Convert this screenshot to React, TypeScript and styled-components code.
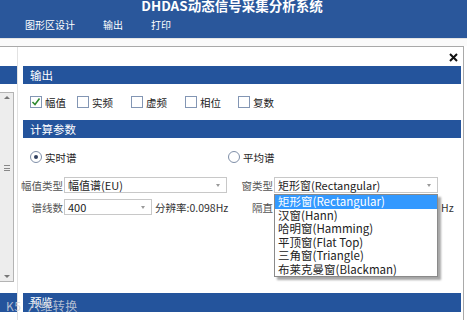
import React from "react";
import styled, { createGlobalStyle } from "styled-components";

const BLUE = "#24549c";
const FONT = `"Noto Sans CJK SC", "Noto Sans", sans-serif`;

const GlobalStyle = createGlobalStyle`
  html, body {
    margin: 0;
    padding: 0;
    background: #ffffff;
  }
  body {
    font-family: ${FONT};
    overflow: hidden;
  }
  * {
    box-sizing: border-box;
  }
`;

const Screen = styled.div`
  position: relative;
  width: 467px;
  height: 320px;
  overflow: hidden;
  display: flex;
  flex-direction: column;
  background: #fff;
`;

const TitleBar = styled.header`
  height: 38px;
  flex-shrink: 0;
  background: #2a579b;
  color: #fff;
  display: flex;
  flex-direction: column;
  overflow: hidden;
`;

const AppTitle = styled.div`
  margin-top: -2px;
  height: 14px;
  line-height: 14px;
  text-align: center;
  font-size: 13.5px;
  font-weight: 700;
  padding-right: 3px;
`;

const MenuBar = styled.nav`
  display: flex;
  gap: 28px;
  margin-top: 6px;
  padding-left: 25px;
  font-size: 10px;
  line-height: 14px;
`;

const Gutter = styled.div`
  height: 8px;
  flex-shrink: 0;
  background: #fafafa;
  border-top: 1px solid #e4e4e4;
`;

const Workspace = styled.div`
  flex: 1;
  display: flex;
  width: 464px;
  border-top: 1px solid #a9a9a9;
  border-right: 1px solid #a9a9a9;
`;

const SidePanel = styled.aside`
  width: 18px;
  flex-shrink: 0;
  display: flex;
  flex-direction: column;
  padding-top: 19px;
  border-right: 1px solid #e2e2e2;
`;

const SideStrip = styled.div<{ $h: number; $mt?: number }>`
  height: ${(p) => p.$h}px;
  margin-top: ${(p) => p.$mt ?? 0}px;
  background: ${BLUE};
`;

const ScrollBox = styled.div`
  margin-top: 8px;
  width: 14px;
  height: 190px;
  border: 1px solid #b4b4b4;
  border-left: none;
  background: #ededed;
  display: flex;
  flex-direction: column;
  align-items: center;
  justify-content: space-between;
  padding: 3px 0;
`;

const ScrollArrow = styled.span<{ $up?: boolean }>`
  width: 0;
  height: 0;
  border-left: 3px solid transparent;
  border-right: 3px solid transparent;
  ${(p) => (p.$up ? "border-bottom: 3px solid #777;" : "border-top: 3px solid #777;")}
`;

const Grip = styled.span`
  width: 6px;
  height: 6px;
  border-top: 1px solid #888;
  border-bottom: 1px solid #888;
  position: relative;
  margin-top: 66px;
  margin-bottom: auto;
  &::after {
    content: "";
    position: absolute;
    left: 0;
    right: 0;
    top: 1.5px;
    border-top: 1px solid #888;
  }
`;

const DialogBody = styled.section`
  flex: 1;
  display: flex;
  flex-direction: column;
  padding: 0 2px 0 5px;
  position: relative;
`;

const CloseRow = styled.div`
  height: 19px;
  display: flex;
  justify-content: flex-end;
  align-items: flex-start;
  padding: 6px 3px 0 0;
`;

const SectionHeader = styled.div<{ $h?: number }>`
  height: ${(p) => p.$h ?? 18}px;
  flex-shrink: 0;
  background: ${BLUE};
  color: #fff;
  font-size: 11.5px;
  line-height: ${(p) => p.$h ?? 18}px;
  padding-left: 7px;
`;

const CheckRow = styled.div`
  height: 36px;
  display: flex;
  align-items: center;
  padding-left: 7px;
`;

const CheckItem = styled.label<{ $w?: number }>`
  display: flex;
  align-items: center;
  gap: 3px;
  width: ${(p) => (p.$w ? `${p.$w}px` : "auto")};
  font-size: 10.5px;
  color: #222;
`;

const CheckBox = styled.span`
  width: 12px;
  height: 12px;
  border: 1px solid #8396b4;
  background: #fff;
  display: flex;
  align-items: center;
  justify-content: center;
`;

const RadioRow = styled.div`
  height: 38px;
  display: flex;
  align-items: center;
`;

const Half = styled.div<{ $w?: number; $pl?: number }>`
  display: flex;
  align-items: center;
  width: ${(p) => (p.$w ? `${p.$w}px` : "auto")};
  flex: ${(p) => (p.$w ? "none" : "1")};
  padding-left: ${(p) => p.$pl ?? 0}px;
`;

const RadioItem = styled.label`
  display: flex;
  align-items: center;
  gap: 3px;
  font-size: 10.5px;
  color: #222;
`;

const RadioCircle = styled.span<{ $on?: boolean }>`
  width: 12px;
  height: 12px;
  border-radius: 50%;
  border: 1px solid #7f8fa8;
  background: #fff;
  display: flex;
  align-items: center;
  justify-content: center;
  &::after {
    content: "";
    width: 4px;
    height: 4px;
    border-radius: 50%;
    background: ${(p) => (p.$on ? "#334260" : "transparent")};
  }
`;

const FieldRow = styled.div<{ $mt?: number }>`
  height: 18px;
  margin-top: ${(p) => p.$mt ?? 0}px;
  display: flex;
  align-items: center;
`;

const FieldLabel = styled.span<{ $w: number }>`
  width: ${(p) => p.$w}px;
  flex-shrink: 0;
  display: flex;
  justify-content: flex-end;
  white-space: nowrap;
  font-size: 10.5px;
  color: #555;
  margin-right: 1px;
`;

const SelectWrap = styled.div<{ $w: number }>`
  position: relative;
  width: ${(p) => p.$w}px;
  flex-shrink: 0;
`;

const SelectBox = styled.div`
  height: 16px;
  border: 1px solid #c8c8c8;
  background: #fff;
  display: flex;
  align-items: center;
  justify-content: space-between;
  padding: 0 6px 0 3px;
  font-size: 11px;
  color: #222;
  white-space: nowrap;
`;

const Caret = styled.span`
  width: 0;
  height: 0;
  border-left: 2.5px solid transparent;
  border-right: 2.5px solid transparent;
  border-top: 3px solid #9a9a9a;
`;

const Note = styled.span<{ $ml?: number }>`
  margin-left: ${(p) => p.$ml ?? 3}px;
  font-size: 10.5px;
  color: #333;
  white-space: nowrap;
`;

const DropList = styled.ul`
  position: absolute;
  z-index: 5;
  top: 17px;
  left: 0;
  width: 100%;
  margin: 0;
  padding: 0;
  list-style: none;
  background: #fff;
  border: 1px solid #8a8a8a;
  box-shadow: 3px 3px 2px rgba(0, 0, 0, 0.35);
`;

const DropItem = styled.li<{ $active?: boolean }>`
  height: 13.5px;
  line-height: 13.5px;
  padding-left: 3px;
  font-size: 11.5px;
  white-space: nowrap;
  color: ${(p) => (p.$active ? "#fff" : "#222")};
  background: ${(p) => (p.$active ? "#3399ff" : "transparent")};
`;

const Spacer = styled.div`
  flex: 1;
`;

const BottomGap = styled.div`
  height: 8px;
`;

const Watermark = styled.div`
  position: absolute;
  left: 6px;
  top: 297px;
  font-size: 12px;
  color: rgba(205, 210, 220, 0.85);
  letter-spacing: 0.5px;
  white-space: nowrap;
  pointer-events: none;
`;

const checks = [
  { label: "幅值", on: true, w: 47 },
  { label: "实频", w: 54 },
  { label: "虚频", w: 54 },
  { label: "相位", w: 53 },
  { label: "复数" },
];

const windows = [
  "矩形窗(Rectangular)",
  "汉窗(Hann)",
  "哈明窗(Hamming)",
  "平顶窗(Flat Top)",
  "三角窗(Triangle)",
  "布莱克曼窗(Blackman)",
];

export default function App() {
  return (
    <>
      <GlobalStyle />
      <Screen>
        <TitleBar>
          <AppTitle>DHDAS动态信号采集分析系统</AppTitle>
          <MenuBar>
            <span>图形区设计</span>
            <span>输出</span>
            <span>打印</span>
          </MenuBar>
        </TitleBar>
        <Gutter />
        <Workspace>
          <SidePanel>
            <SideStrip $h={18} />
            <ScrollBox>
              <ScrollArrow $up />
              <Grip />
              <ScrollArrow />
            </ScrollBox>
            <SideStrip $h={19} $mt={11} />
          </SidePanel>

          <DialogBody>
            <CloseRow>
              <svg width="9" height="9" viewBox="0 0 9 9">
                <path d="M1 1 L8 8 M8 1 L1 8" stroke="#111" strokeWidth="2" />
              </svg>
            </CloseRow>

            <SectionHeader>输出</SectionHeader>
            <CheckRow>
              {checks.map((c) => (
                <CheckItem key={c.label} $w={c.w}>
                  <CheckBox>
                    {c.on && (
                      <svg width="10" height="10" viewBox="0 0 10 10">
                        <path d="M1.5 5 L4 7.5 L8.5 1.5" fill="none" stroke="#2f8a2f" strokeWidth="1.6" />
                      </svg>
                    )}
                  </CheckBox>
                  {c.label}
                </CheckItem>
              ))}
            </CheckRow>

            <SectionHeader>计算参数</SectionHeader>
            <RadioRow>
              <Half $w={205} $pl={7}>
                <RadioItem>
                  <RadioCircle $on />
                  实时谱
                </RadioItem>
              </Half>
              <Half>
                <RadioItem>
                  <RadioCircle />
                  平均谱
                </RadioItem>
              </Half>
            </RadioRow>

            <FieldRow>
              <Half $w={205}>
                <FieldLabel $w={40}>幅值类型</FieldLabel>
                <SelectWrap $w={163}>
                  <SelectBox>
                    幅值谱(EU)
                    <Caret />
                  </SelectBox>
                </SelectWrap>
              </Half>
              <Half>
                <FieldLabel $w={45}>窗类型</FieldLabel>
                <SelectWrap $w={164}>
                  <SelectBox>
                    矩形窗(Rectangular)
                    <Caret />
                  </SelectBox>
                  <DropList>
                    {windows.map((w, i) => (
                      <DropItem key={w} $active={i === 0}>
                        {w}
                      </DropItem>
                    ))}
                  </DropList>
                </SelectWrap>
              </Half>
            </FieldRow>

            <FieldRow $mt={4}>
              <Half $w={205}>
                <FieldLabel $w={40}>谱线数</FieldLabel>
                <SelectWrap $w={88}>
                  <SelectBox>
                    400
                    <Caret />
                  </SelectBox>
                </SelectWrap>
                <Note>分辨率:0.098Hz</Note>
              </Half>
              <Half>
                <FieldLabel $w={45}>隔直</FieldLabel>
                <SelectWrap $w={164}>
                  <SelectBox>
                    0.5
                    <Caret />
                  </SelectBox>
                </SelectWrap>
                <Note>Hz</Note>
              </Half>
            </FieldRow>

            <Spacer />
            <SectionHeader $h={19}>预览</SectionHeader>
            <BottomGap />
          </DialogBody>
        </Workspace>
        <Watermark>K5&nbsp;&nbsp;六维转换</Watermark>
      </Screen>
    </>
  );
}
